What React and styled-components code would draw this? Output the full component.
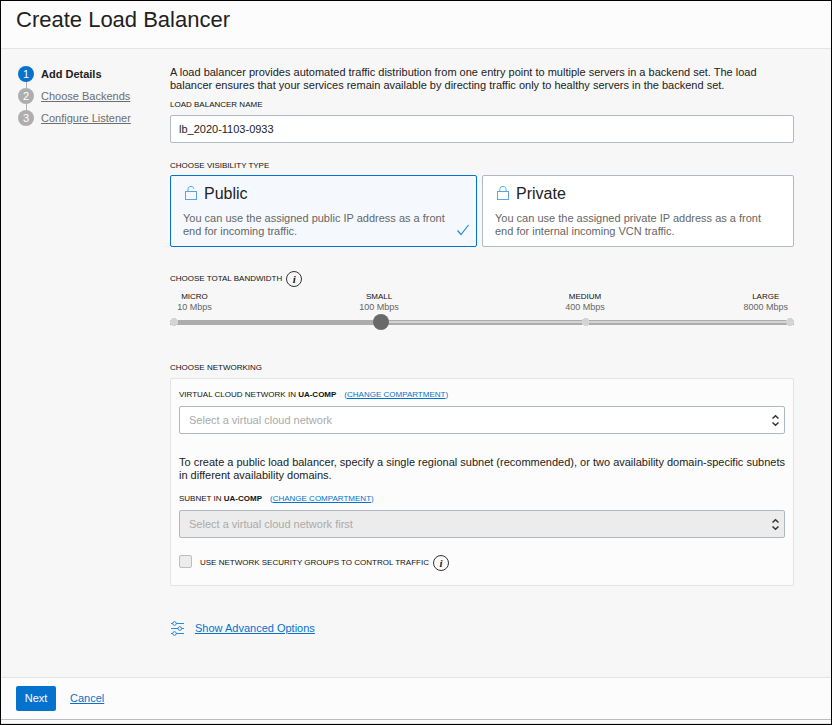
import React, { useState } from "react";
import styled, { createGlobalStyle, css } from "styled-components";

const blue = "#0572ce";

const GlobalStyle = createGlobalStyle`
  *, *::before, *::after { box-sizing: border-box; }
  body {
    margin: 0;
    background: #fcfcfc;
    color: #222;
    font: 11px/13px "Liberation Sans", Arial, sans-serif;
  }
  h1, h2, p, ol, fieldset, legend { margin: 0; padding: 0; }
  button, input, select { font: inherit; color: inherit; }
`;

const Dialog = styled.form`
  display: flex;
  flex-direction: column;
  min-height: 100vh;
  border: 1px solid #000;
  background: #fcfcfc;
`;

const Header = styled.header`
  padding: 6px 15px 15px;
  border-bottom: 1px solid #e4e4e4;
`;

const Title = styled.h1`
  font-size: 22px;
  line-height: 26px;
  font-weight: 400;
`;

const Body = styled.div`
  flex: 1;
  display: grid;
  grid-template-columns: 136px minmax(0, 1fr);
  column-gap: 16px;
  padding: 17px 37px 41px 17px;
  background: #f7f7f7;
`;

const Steps = styled.ol`
  display: flex;
  flex-direction: column;
  gap: 6px;
  list-style: none;
`;

const Step = styled.li`
  position: relative;
  display: flex;
  align-items: center;
  gap: 7px;
  height: 16px;
  font-weight: ${(p) => (p.$active ? 700 : 400)};

  &:not(:first-child)::before {
    content: "";
    position: absolute;
    left: 8px;
    bottom: 100%;
    width: 1px;
    height: 6px;
    background: #b0b0b0;
  }
`;

const StepNumber = styled.span`
  width: 16px;
  height: 16px;
  border-radius: 50%;
  background: ${(p) => (p.$active ? blue : "#aeaeae")};
  color: #fff;
  font-weight: 400;
  line-height: 16px;
  text-align: center;
`;

const Link = styled.a`
  color: ${(p) => (p.$muted ? "#6e6e6e" : blue)};
  text-decoration: underline;
  text-underline-offset: 1px;
`;

const Content = styled.main`
  display: flex;
  flex-direction: column;
`;

const capsText = css`
  font-size: 8px;
  line-height: 12px;
  color: #111;
`;

const Label = styled.label`
  ${capsText}
`;

const Field = styled.div`
  display: flex;
  flex-direction: column;
  gap: 4px;
  margin-top: 7px;
`;

const control = css`
  width: 100%;
  height: 28px;
  padding: 0 8px;
  border: 1px solid #b2b8c2;
  border-radius: 2px;
  background: #fff;
`;

const TextInput = styled.input`
  ${control}
`;

const Group = styled.fieldset`
  min-width: 0;
  border: 0;
  margin-top: ${(p) => p.$space}px;
`;

const Legend = styled.legend`
  ${capsText}
  display: flex;
  align-items: center;
  gap: 4px;
`;

const Cards = styled.div`
  display: grid;
  grid-template-columns: 307fr 312fr;
  gap: 5px;
  margin-top: 3px;
`;

const Card = styled.label`
  display: grid;
  grid-template-columns: minmax(0, 1fr) 14px;
  column-gap: 4px;
  min-height: 72px;
  padding: 8px 6px 8px 12px;
  border: 1px solid ${(p) => (p.$selected ? blue : "#b2b8c2")};
  border-radius: 2px;
  background: ${(p) => (p.$selected ? "#f5f9fe" : "#fff")};
  cursor: pointer;
`;

const CardRadio = styled.input`
  appearance: none;
  position: absolute;
  margin: 0;
`;

const CardTitle = styled.span`
  display: flex;
  align-items: center;
  gap: 6px;
  font-size: 16px;
  line-height: 20px;
`;

const CardText = styled.span`
  display: block;
  margin-top: 8px;
  color: #666;
`;

const CardMark = styled.span`
  align-self: end;
  height: 15px;
`;

const InfoButton = styled.button`
  width: 16px;
  height: 16px;
  padding: 0;
  border: 1px solid #333;
  border-radius: 50%;
  background: transparent;
  color: #222;
  font: italic 700 11px/13px "Liberation Serif", serif;
`;

const Stops = styled.div`
  display: grid;
  grid-template-columns: 49fr 320fr 92fr 163fr;
  margin-top: 4px;
`;

const Stop = styled.div`
  display: flex;
  flex-direction: column;
  text-align: center;
  font-size: 9px;
  line-height: 11px;
  color: #666;

  &:last-child {
    justify-self: end;
    padding-right: 6px;
  }
`;

const StopName = styled.span`
  font-size: 8px;
  color: #111;
`;

const dot = (x) => `radial-gradient(circle at ${x} 8px, #d4d4d4 0 4px, transparent 4px)`;

const Slider = styled.input`
  appearance: none;
  display: block;
  width: 100%;
  height: 16px;
  margin: 1px 0 0;
  background:
    ${dot("4px")},
    ${dot("66.6%")},
    ${dot("calc(100% - 4px)")},
    linear-gradient(#acacac, #acacac) 0 6px / ${(p) => p.$fill}% 5px no-repeat,
    linear-gradient(#acacac 0 1px, #d4d4d4 1px 3px, #acacac 3px) 0 6px / 100% 5px no-repeat;

  &::-webkit-slider-thumb {
    appearance: none;
    width: 16px;
    height: 16px;
    border-radius: 50%;
    background: #696969;
  }
`;

const Panel = styled.div`
  margin-top: 4px;
  padding: 10px 8px 14px;
  border: 1px solid #e4e4e4;
  border-radius: 2px;
  background: #fcfcfc;
`;

const LabelRow = styled.div`
  ${capsText}
  display: flex;
  gap: 8px;
`;

const LinkNote = styled.span`
  color: ${blue};
`;

const SelectBox = styled.div`
  position: relative;
  margin-top: 5px;
`;

const Select = styled.select`
  ${control}
  appearance: none;
  padding: 0 24px 0 9px;
  color: #aaa;
  opacity: 1;

  &:disabled {
    background: #ececec;
  }
`;

const SelectArrows = styled.svg`
  position: absolute;
  top: 8px;
  right: 5px;
  pointer-events: none;
`;

const Note = styled.p`
  margin: 22px 0 11px;
`;

const CheckRow = styled.div`
  display: flex;
  align-items: center;
  gap: 8px;
  margin-top: 17px;
`;

const CheckLabel = styled(Label)`
  margin-right: -4px;
`;

const Checkbox = styled.input`
  appearance: none;
  align-self: flex-start;
  width: 13px;
  height: 13px;
  margin: 0;
  border: 1px solid #b8bec8;
  border-radius: 2px;
  background: #ececec;
`;

const Advanced = styled.div`
  display: flex;
  align-items: center;
  gap: 10px;
  margin-top: 35px;
`;

const Footer = styled.footer`
  display: flex;
  align-items: center;
  gap: 14px;
  padding: 8px 15px;
  border-top: 1px solid #e4e4e4;
  border-bottom: 1px solid #b8bbc8;
`;

const PageEdge = styled.div`
  height: 4px;
  border-bottom: 1px solid #e4e4e4;
`;

const PrimaryButton = styled.button`
  min-width: 40px;
  height: 25px;
  padding: 0 8px;
  border: 0;
  border-radius: 2px;
  background: ${blue};
  color: #fff;
`;

function LockIcon({ open }) {
  return (
    <svg width="15" height="16" viewBox="0 0 15 16" fill="none" stroke="#5ba5e6" aria-hidden="true">
      <rect x="2.5" y="5.5" width="11" height="8" />
      <path d={open ? "M5 5.5V3C5 1.2 6.2 .5 8 .5S10.6 1.3 10.9 2.8" : "M4.9 5.5V3.5C4.9 1.5 6 .5 8 .5S11.1 1.5 11.1 3.5V5.5"} />
    </svg>
  );
}

function CheckIcon() {
  return (
    <svg width="14" height="14" viewBox="0 0 14 14" fill="none" stroke="#2b88d8" strokeWidth="1.2" aria-hidden="true">
      <path d="M1.5 7.5L5 11.5L12.5 2" />
    </svg>
  );
}

function SlidersIcon() {
  return (
    <svg width="15" height="15" viewBox="0 0 15 15" fill="none" stroke="#2b88d8" aria-hidden="true">
      <path d="M1 2.5H2.7M6.3 2.5H14M1 7.5H8M11.6 7.5H14M1 12.5H2.7M6.3 12.5H14" />
      <circle cx="4.5" cy="2.5" r="1.8" />
      <circle cx="9.8" cy="7.5" r="1.8" />
      <circle cx="4.5" cy="12.5" r="1.8" />
    </svg>
  );
}

const steps = ["Add Details", "Choose Backends", "Configure Listener"];

const visibilities = [
  { id: "public", title: "Public", text: "You can use the assigned public IP address as a front end for incoming traffic." },
  { id: "private", title: "Private", text: "You can use the assigned private IP address as a front end for internal incoming VCN traffic." },
];

const bandwidths = [
  { name: "MICRO", rate: "10 Mbps" },
  { name: "SMALL", rate: "100 Mbps" },
  { name: "MEDIUM", rate: "400 Mbps" },
  { name: "LARGE", rate: "8000 Mbps" },
];

function NetworkSelect({ id, label, placeholder, disabled }) {
  return (
    <div>
      <LabelRow>
        <Label htmlFor={id}>
          {label} <b>UA-COMP</b>
        </Label>
        <LinkNote>
          (<Link href="#compartment">CHANGE COMPARTMENT</Link>)
        </LinkNote>
      </LabelRow>
      <SelectBox>
        <Select id={id} disabled={disabled} defaultValue="">
          <option value="">{placeholder}</option>
        </Select>
        <SelectArrows width="9" height="13" viewBox="0 0 9 13" fill="none" stroke="#333" strokeWidth="1.5" aria-hidden="true">
          <path d="M1.5 4.5L4.5 1.7L7.5 4.5M1.5 8.5L4.5 11.3L7.5 8.5" />
        </SelectArrows>
      </SelectBox>
    </div>
  );
}

export default function App() {
  const [name, setName] = useState("lb_2020-1103-0933");
  const [visibility, setVisibility] = useState("public");
  const [bandwidth, setBandwidth] = useState(1);

  return (
    <>
      <GlobalStyle />
      <Dialog onSubmit={(e) => e.preventDefault()}>
        <Header>
          <Title>Create Load Balancer</Title>
        </Header>
        <Body>
          <Steps>
            {steps.map((step, i) => (
              <Step key={step} $active={i === 0}>
                <StepNumber $active={i === 0}>{i + 1}</StepNumber>
                {i === 0 ? step : <Link $muted href={`#step-${i + 1}`}>{step}</Link>}
              </Step>
            ))}
          </Steps>
          <Content>
            <p>
              A load balancer provides automated traffic distribution from one entry point to multiple servers in a
              backend set. The load balancer ensures that your services remain available by directing traffic only to
              healthy servers in the backend set.
            </p>
            <Field>
              <Label htmlFor="lb-name">LOAD BALANCER NAME</Label>
              <TextInput id="lb-name" value={name} onChange={(e) => setName(e.target.value)} />
            </Field>
            <Group $space={17}>
              <Legend>CHOOSE VISIBILITY TYPE</Legend>
              <Cards>
                {visibilities.map((v) => (
                  <Card key={v.id} $selected={visibility === v.id}>
                    <span>
                      <CardRadio
                        type="radio"
                        name="visibility"
                        checked={visibility === v.id}
                        onChange={() => setVisibility(v.id)}
                      />
                      <CardTitle>
                        <LockIcon open={v.id === "public"} />
                        {v.title}
                      </CardTitle>
                      <CardText>{v.text}</CardText>
                    </span>
                    <CardMark>{visibility === v.id && <CheckIcon />}</CardMark>
                  </Card>
                ))}
              </Cards>
            </Group>
            <Group $space={24}>
              <Legend>
                <label htmlFor="bandwidth">CHOOSE TOTAL BANDWIDTH</label>
                <InfoButton type="button" aria-label="About total bandwidth">i</InfoButton>
              </Legend>
              <Stops>
                {bandwidths.map((b) => (
                  <Stop key={b.name}>
                    <StopName>{b.name}</StopName>
                    <span>{b.rate}</span>
                  </Stop>
                ))}
              </Stops>
              <Slider
                id="bandwidth"
                type="range"
                min="0"
                max="3"
                value={bandwidth}
                $fill={(bandwidth * 100) / 3}
                onChange={(e) => setBandwidth(Number(e.target.value))}
              />
            </Group>
            <Group $space={32}>
              <Legend>CHOOSE NETWORKING</Legend>
              <Panel>
                <NetworkSelect id="vcn" label="VIRTUAL CLOUD NETWORK IN" placeholder="Select a virtual cloud network" />
                <Note>
                  To create a public load balancer, specify a single regional subnet (recommended), or two availability
                  domain-specific subnets in different availability domains.
                </Note>
                <NetworkSelect id="subnet" label="SUBNET IN" placeholder="Select a virtual cloud network first" disabled />
                <CheckRow>
                  <Checkbox id="nsg" type="checkbox" />
                  <CheckLabel htmlFor="nsg">USE NETWORK SECURITY GROUPS TO CONTROL TRAFFIC</CheckLabel>
                  <InfoButton type="button" aria-label="About network security groups">i</InfoButton>
                </CheckRow>
              </Panel>
            </Group>
            <Advanced>
              <SlidersIcon />
              <Link href="#advanced">Show Advanced Options</Link>
            </Advanced>
          </Content>
        </Body>
        <Footer>
          <PrimaryButton type="submit">Next</PrimaryButton>
          <Link href="#cancel">Cancel</Link>
        </Footer>
        <PageEdge />
      </Dialog>
    </>
  );
}
